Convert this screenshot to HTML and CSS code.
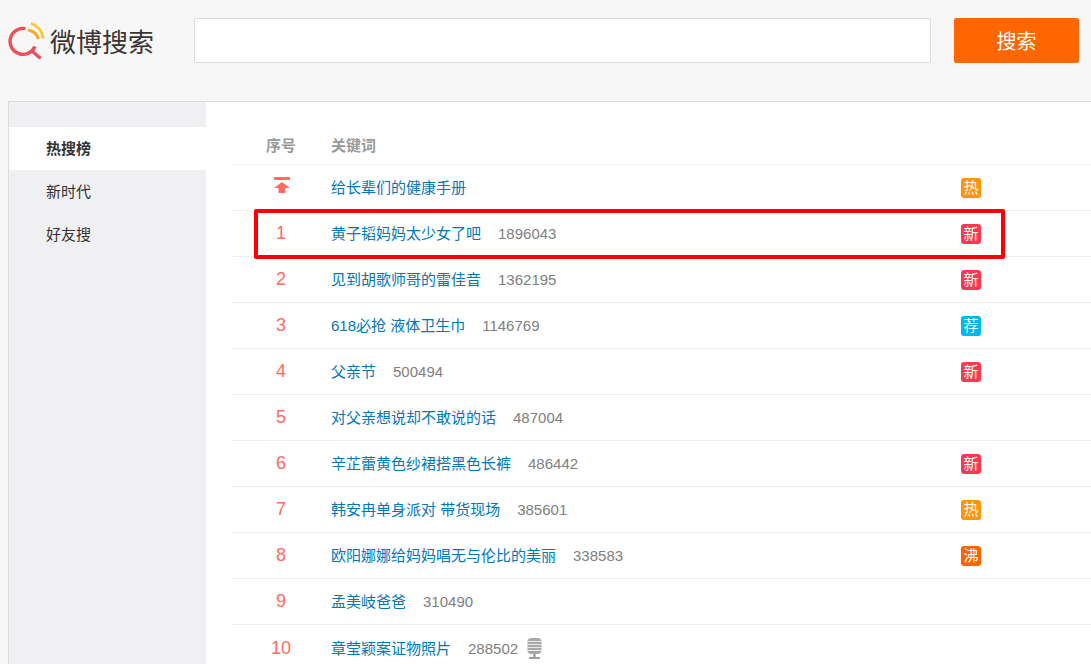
FILE: index.html
```html
<!DOCTYPE html>
<html lang="zh-CN">
<head>
<meta charset="utf-8">
<title>微博搜索</title>
<link rel="stylesheet" href="styles.css">
</head>
<body>
<header class="top">
  <div class="logo">
    <svg class="logo-icon" width="44" height="44" viewBox="0 0 44 44" aria-hidden="true">
      <path d="M17.5 8.6 A13 13 0 1 0 27 26.5" fill="none" stroke="#ea4f5b" stroke-width="3.4"/>
      <path d="M24.5 31.5 L31.5 37.5" fill="none" stroke="#ea4f5b" stroke-width="3.4" stroke-linecap="round"/>
      <path d="M20 10 Q28.5 11.5 30.5 19" fill="none" stroke="#f7a92b" stroke-width="3"/>
      <path d="M23 3.5 Q33.5 6.5 35 18.5" fill="none" stroke="#fbc531" stroke-width="2.8"/>
    </svg>
    <span class="logo-text">微博搜索</span>
  </div>
  <input class="search-input" type="text" aria-label="搜索">
  <button class="search-btn" type="button">搜索</button>
</header>
<main class="panel">
  <nav class="side">
    <a class="side-item active">热搜榜</a>
    <a class="side-item">新时代</a>
    <a class="side-item">好友搜</a>
  </nav>
  <section class="list">
    <div class="row head"><span class="rank-col">序号</span><span class="kw-col">关键词</span></div>
    <div class="row">
      <span class="rank-col"><svg class="top-icon" width="16" height="16" viewBox="0 0 16 16" aria-hidden="true"><rect x="0" y="0" width="16" height="3" fill="#ff6b5f"/><path d="M8 5 L16 11 H11.5 V16 H4.5 V11 H0 Z" fill="#ff6b5f"/></svg></span>
      <span class="kw-col"><a class="kw">给长辈们的健康手册</a></span><span class="tag hot">热</span>
    </div>
    <div class="row"><span class="rank-col rank">1</span><span class="kw-col"><a class="kw">黄子韬妈妈太少女了吧</a><span class="num">1896043</span></span><span class="tag new">新</span></div>
    <div class="row"><span class="rank-col rank">2</span><span class="kw-col"><a class="kw">见到胡歌师哥的雷佳音</a><span class="num">1362195</span></span><span class="tag new">新</span></div>
    <div class="row"><span class="rank-col rank">3</span><span class="kw-col"><a class="kw">618必抢 液体卫生巾</a><span class="num">1146769</span></span><span class="tag rec">荐</span></div>
    <div class="row"><span class="rank-col rank">4</span><span class="kw-col"><a class="kw">父亲节</a><span class="num">500494</span></span><span class="tag new">新</span></div>
    <div class="row"><span class="rank-col rank">5</span><span class="kw-col"><a class="kw">对父亲想说却不敢说的话</a><span class="num">487004</span></span></div>
    <div class="row"><span class="rank-col rank">6</span><span class="kw-col"><a class="kw">辛芷蕾黄色纱裙搭黑色长裤</a><span class="num">486442</span></span><span class="tag new">新</span></div>
    <div class="row"><span class="rank-col rank">7</span><span class="kw-col"><a class="kw">韩安冉单身派对 带货现场</a><span class="num">385601</span></span><span class="tag hot">热</span></div>
    <div class="row"><span class="rank-col rank">8</span><span class="kw-col"><a class="kw">欧阳娜娜给妈妈唱无与伦比的美丽</a><span class="num">338583</span></span><span class="tag boil">沸</span></div>
    <div class="row"><span class="rank-col rank">9</span><span class="kw-col"><a class="kw">孟美岐爸爸</a><span class="num">310490</span></span></div>
    <div class="row"><span class="rank-col rank">10</span><span class="kw-col"><a class="kw">章莹颖案证物照片</a><span class="num">288502</span>
      <svg class="mic" width="15" height="21" viewBox="0 0 15 21" aria-hidden="true"><rect x="0.5" y="0" width="14" height="16" rx="4" fill="#a8a8a8"/><path d="M0.5 3.5h14M0.5 6.5h14M0.5 9.5h14M0.5 12.5h14" stroke="#e8e8e8" stroke-width="1"/><path d="M7.5 16v3" stroke="#8a8a8a" stroke-width="2"/><rect x="2" y="19" width="11" height="2" fill="#a0a0a0"/></svg>
    </span></div>
  </section>
  <div class="highlight"></div>
</main>
</body>
</html>
```
FILE: styles.css
```css
* { box-sizing: border-box; }
html, body { margin: 0; height: 664px; overflow: hidden; }
body {
  background: #f7f7f7;
  font-family: "Liberation Sans", "Noto Sans CJK SC", sans-serif;
  font-size: 15px;
}
.top {
  height: 101px;
  padding: 18px 12px 0 8px;
  display: flex;
  align-items: flex-start;
}
.logo { width: 186px; height: 45px; display: flex; align-items: center; }
.logo-icon { flex: none; margin-top: 3px; }
.logo-text {
  margin: 5px 0 0 -1px;
  font-size: 26px;
  line-height: 45px;
  color: #3a3533;
  transform: translateX(-1px);
}
.search-input {
  width: 737px;
  height: 45px;
  background: #fff;
  border: 1px solid #dcdcdc;
  border-radius: 2px;
  outline: none;
}
.search-btn {
  margin-left: 23px;
  width: 125px;
  height: 45px;
  border: 0;
  border-radius: 2px;
  background: #ff6600;
  color: #fff;
  font-family: inherit;
  font-size: 20px;
}
.panel {
  position: relative;
  margin-left: 8px;
  height: 563px;
  background: #fff;
  border: 1px solid #dcdcdf;
  border-right: 0;
  border-bottom: 0;
  display: flex;
}
.side {
  width: 197px;
  flex: none;
  background: #f0f0f2;
  padding-top: 25px;
  display: flex;
  flex-direction: column;
}
.side-item {
  height: 43px;
  line-height: 43px;
  padding-left: 37px;
  color: #333;
}
.side-item.active { background: #fff; font-weight: bold; }
.list { flex: 1; padding: 23px 0 0 26px; }
.row {
  height: 46px;
  display: flex;
  align-items: center;
  border-bottom: 1px solid #f0f0f0;
}
.row:last-child { border-bottom: 0; }
.row.head {
  height: 40px;
  font-weight: bold;
  color: #999;
  border-bottom-color: #f7f7f7;
}
.rank-col {
  width: 99px;
  flex: none;
  text-align: center;
  display: flex;
  justify-content: center;
  padding-right: 1px;
}
.top-icon { margin: 0 0 5px 1px; }
.rank { font-size: 18px; color: #ff6b60; }
.kw-col { width: 630px; flex: none; display: flex; align-items: center; }
.kw { color: #0078b6; padding-bottom: 2px; }
.num { margin-left: 17px; color: #808080; }
.mic { margin-left: 9px; }
.tag {
  width: 20px;
  height: 20px;
  border-radius: 3px;
  color: #fff;
  font-size: 15px;
  line-height: 19px;
  text-align: center;
}
.hot { background: #ff9406; }
.new { background: #ff3852; }
.rec { background: #00b7ee; }
.boil { background: #f86400; }
.highlight {
  position: absolute;
  left: 245px;
  top: 107px;
  width: 751px;
  height: 50px;
  border: 4px solid #f00;
  border-radius: 2px;
}
```
